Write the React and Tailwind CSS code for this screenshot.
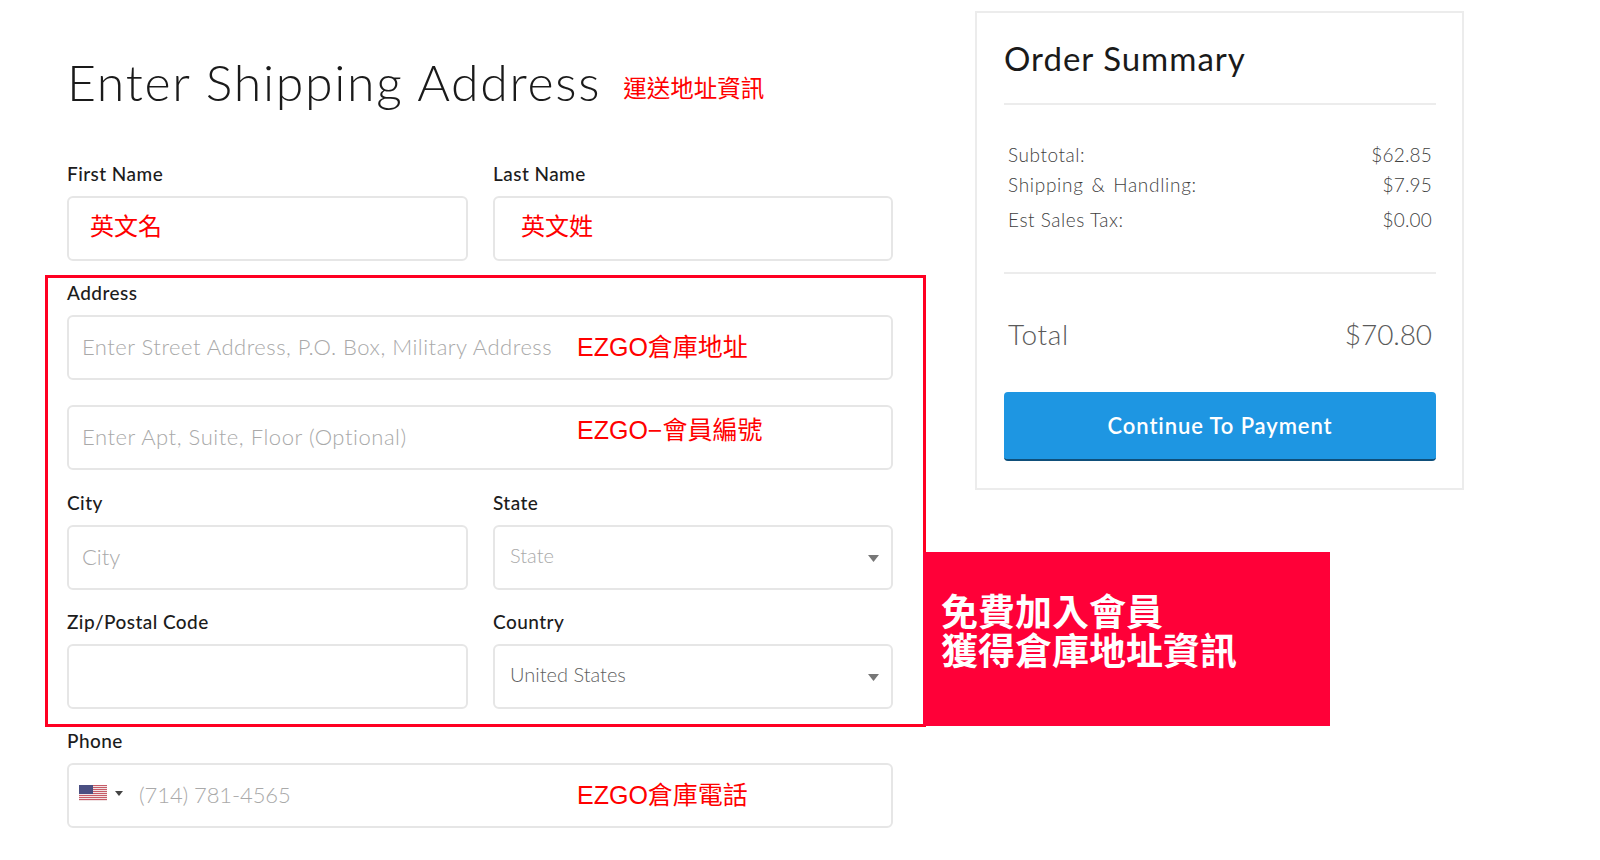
const SANS = "font-['Lato','Noto_Sans',sans-serif]";
const REDBASE = "font-['Liberation_Sans','Noto_Sans_CJK_TC',sans-serif] text-[#ff0000] leading-[30px] whitespace-nowrap";
const RED = `${REDBASE} text-[24px]`;
const REDL = `${REDBASE} text-[25px]`;

function Label({ children }) {
  return <div className="h-5 mb-3 text-[19px] leading-5 font-medium text-[#1c1c1c] tracking-[0.45px]">{children}</div>;
}

function Box({ children, className = "" }) {
  return (
    <div className={`h-[65px] rounded-[6px] border-2 border-[#e6e6e6] bg-white flex items-center ${className}`}>
      {children}
    </div>
  );
}

function Ph({ children, className = "" }) {
  return <span className={`text-[22px] leading-7 font-light text-[#a9a9a9] whitespace-nowrap ${className}`}>{children}</span>;
}

function Caret({ className = "" }) {
  return (
    <svg width="11" height="7" viewBox="0 0 11 7" className={className}>
      <path d="M0 0h11L5.5 7z" fill="#777" />
    </svg>
  );
}

function Select({ children, color }) {
  return (
    <Box className="pl-[15px] pr-[12px] justify-between">
      <span className={`text-[20px] leading-7 font-light -mt-[5px] ${color}`}>{children}</span>
      <Caret className="mt-[2px]" />
    </Box>
  );
}

function Flag() {
  const stripes = [0, 2, 4, 6, 8, 10, 12, 14];
  return (
    <svg width="28" height="16" viewBox="0 0 28 16" className="shrink-0">
      <rect width="28" height="16" fill="#f7f3f3" />
      {stripes.map((y) => (
        <rect key={y} y={y} width="28" height="1.1" fill="#c65c68" />
      ))}
      <rect width="14" height="9" fill="#4a4f82" />
    </svg>
  );
}

function Line({ label, value, className = "", labelClass = "tracking-[0.55px]" }) {
  return (
    <div className={`flex justify-between text-[19px] leading-6 font-light text-[#3f3f3f] ${className}`}>
      <span className={labelClass}>{label}</span>
      <span className="tracking-[0.2px]">{value}</span>
    </div>
  );
}

export default function App() {
  return (
    <div className={`relative w-[1600px] h-[860px] overflow-hidden bg-white flex ${SANS}`}>
      <main className="ml-[67px] w-[826px] shrink-0">
        <div className="mt-[52px] h-[60px] flex items-center">
          <h1 className="text-[50px] leading-[60px] font-light text-[#1a1a1a] tracking-[1.7px] whitespace-nowrap">Enter Shipping Address</h1>
          <span className={`ml-[22px] mt-[14px] ${REDBASE} text-[23.5px]`}>運送地址資訊</span>
        </div>

        <div className="mt-[52px] grid grid-cols-[401px_400px] gap-x-[25px]">
          <div>
            <Label>First Name</Label>
            <Box className="pl-[21px]"><span className={`${RED} -mt-[4px]`}>英文名</span></Box>
          </div>
          <div>
            <Label>Last Name</Label>
            <Box className="pl-[26px]"><span className={`${RED} -mt-[4px]`}>英文姓</span></Box>
          </div>
        </div>

        <div className="mt-[22px]">
          <Label>Address</Label>
          <Box className="pl-[13px]">
            <Ph className="w-[495px] tracking-[0.5px] -mt-[2px]">Enter Street Address, P.O. Box, Military Address</Ph>
            <span className={`${REDL} -mt-[2px]`}>EZGO倉庫地址</span>
          </Box>
          <Box className="pl-[13px] mt-[25px]">
            <Ph className="w-[495px] tracking-[0.55px] -mt-[2px]">Enter Apt, Suite, Floor (Optional)</Ph>
            <span className={`${REDL} -mt-[16px]`}>EZGO−會員編號</span>
          </Box>
        </div>

        <div className="mt-[23px] grid grid-cols-[401px_400px] gap-x-[25px]">
          <div>
            <Label>City</Label>
            <Box className="pl-[13px]"><Ph className="-mt-[2px]">City</Ph></Box>
          </div>
          <div>
            <Label>State</Label>
            <Select color="text-[#aaaaaa]">State</Select>
          </div>
        </div>

        <div className="mt-[22px] grid grid-cols-[401px_400px] gap-x-[25px]">
          <div>
            <Label>Zip/Postal Code</Label>
            <Box />
          </div>
          <div>
            <Label>Country</Label>
            <Select color="text-[#5f5f5f]">United States</Select>
          </div>
        </div>

        <div className="mt-[22px]">
          <Label>Phone</Label>
          <Box className="pl-[10px]">
            <span className="-mt-[5px] flex items-center">
              <Flag />
              <svg width="8" height="5" viewBox="0 0 8 5" className="ml-[8px]"><path d="M0 0h8L4 5z" fill="#444" /></svg>
            </span>
            <Ph className="ml-[16px] w-[438px] tracking-[-0.1px] -mt-[2px]">(714) 781-4565</Ph>
            <span className={`${REDL} -mt-[2px]`}>EZGO倉庫電話</span>
          </Box>
        </div>
      </main>

      <aside className="ml-[82px] mt-[11px] w-[489px] h-[479px] shrink-0 border-2 border-[#ececec] pl-[27px] pr-[26px] bg-white">
        <h2 className="mt-[27px] h-[36px] text-[33px] leading-[36px] font-normal text-[#1a1a1a] tracking-[1px] whitespace-nowrap">Order Summary</h2>
        <div className="mt-[27px] h-0.5 bg-[#ececec]" />
        <div className="mt-[38px] pl-1 pr-[4px]">
          <Line label="Subtotal:" value="$62.85" />
          <Line label="Shipping & Handling:" value="$7.95" className="mt-[6px]" labelClass="tracking-[0.7px] [word-spacing:2px]" />
          <Line label="Est Sales Tax:" value="$0.00" className="mt-[11px]" />
        </div>
        <div className="mt-[40px] h-0.5 bg-[#ececec]" />
        <div className="mt-[42px] pl-1 pr-[4px] flex justify-between text-[28px] leading-9 font-light text-[#5a5a5a]">
          <span className="tracking-[0.7px]">Total</span>
          <span className="tracking-[-0.1px]">$70.80</span>
        </div>
        <button className="mt-[40px] w-full h-[69px] rounded-[4px] bg-[#1e96e2] border-b-2 border-[#0f4f7a] text-white text-[22px] font-semibold tracking-[0.9px]">Continue To Payment</button>
      </aside>

      <div className="absolute left-[45px] top-[275px] w-[881px] h-[452px] border-[3px] border-[#ff0022] pointer-events-none" />
      <div className="absolute left-[923px] top-[552px] w-[407px] h-[174px] bg-[#ff0038] pl-[18px] pt-[39px] text-white text-[37px] leading-[39px] font-bold font-['Noto_Sans_CJK_TC',sans-serif]">
        <div>免費加入會員</div>
        <div>獲得倉庫地址資訊</div>
      </div>
    </div>
  );
}
